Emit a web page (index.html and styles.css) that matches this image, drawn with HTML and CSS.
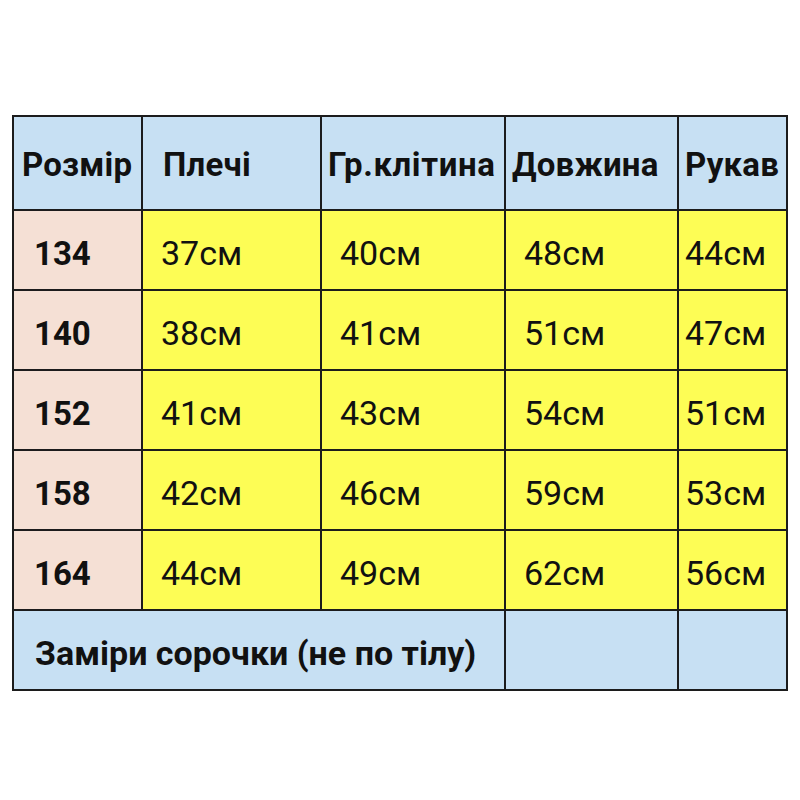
FILE: index.html
```html
<!DOCTYPE html>
<html lang="uk">
<head>
<meta charset="utf-8">
<link rel="stylesheet" href="styles.css">
</head>
<body>
<div class="grid">
  <div class="cell head c1">Розмір</div>
  <div class="cell head c2">Плечі</div>
  <div class="cell head c3">Гр.клітина</div>
  <div class="cell head c4">Довжина</div>
  <div class="cell head c5">Рукав</div>

  <div class="cell size">134</div>
  <div class="cell val">37см</div>
  <div class="cell val">40см</div>
  <div class="cell val">48см</div>
  <div class="cell val last">44см</div>

  <div class="cell size">140</div>
  <div class="cell val">38см</div>
  <div class="cell val">41см</div>
  <div class="cell val">51см</div>
  <div class="cell val last">47см</div>

  <div class="cell size">152</div>
  <div class="cell val">41см</div>
  <div class="cell val">43см</div>
  <div class="cell val">54см</div>
  <div class="cell val last">51см</div>

  <div class="cell size">158</div>
  <div class="cell val">42см</div>
  <div class="cell val">46см</div>
  <div class="cell val">59см</div>
  <div class="cell val last">53см</div>

  <div class="cell size">164</div>
  <div class="cell val">44см</div>
  <div class="cell val">49см</div>
  <div class="cell val">62см</div>
  <div class="cell val last">56см</div>

  <div class="cell foot">Заміри сорочки (не по тілу)</div>
  <div class="cell blank"></div>
  <div class="cell blank"></div>
</div>
</body>
</html>
```
FILE: styles.css
```css
html, body {
  margin: 0;
  background: #ffffff;
}
body {
  padding: 115px 0 0 12px;
  font-family: Roboto, "Noto Sans", "DejaVu Sans", sans-serif;
  color: #111111;
}
.grid {
  display: grid;
  width: 776px;
  box-sizing: border-box;
  grid-template-columns: 127px 177px 182px 171px 107px;
  grid-template-rows: 92px repeat(6, 78px);
  gap: 2px;
  padding: 2px;
  background: #1c1c1c;
}
.cell {
  display: flex;
  align-items: center;
  white-space: nowrap;
  overflow: hidden;
}
.head {
  background: #c7e0f3;
  font-weight: 700;
  font-size: 33px;
  letter-spacing: 0.2px;
  padding-left: 6px;
  padding-top: 2px;
}
.head.c1 { padding-left: 8px; }
.head.c2 { padding-left: 20px; }
.head.c3 { letter-spacing: 0.6px; }
.size {
  background: #f5e0d5;
  font-weight: 700;
  font-size: 33px;
  padding-left: 20px;
  padding-top: 6px;
}
.val {
  background: #fdfd55;
  font-size: 34px;
  padding-left: 18px;
  padding-top: 6px;
}
.val.last { padding-left: 6px; }
.foot {
  grid-column: 1 / span 3;
  background: #c7e0f3;
  font-weight: 700;
  font-size: 34px;
  padding-left: 21px;
  padding-top: 6px;
}
.blank {
  background: #c7e0f3;
}
```
